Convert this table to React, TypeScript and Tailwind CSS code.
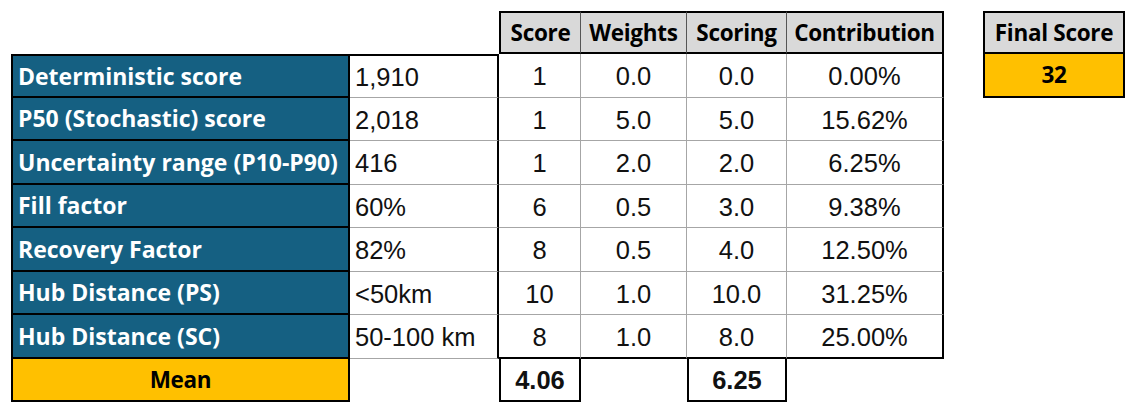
import React from 'react'

const rows = [
  { label: 'Deterministic score', value: '1,910', score: '1', weight: '0.0', scoring: '0.0', contrib: '0.00%' },
  { label: 'P50 (Stochastic) score', value: '2,018', score: '1', weight: '5.0', scoring: '5.0', contrib: '15.62%' },
  { label: 'Uncertainty range (P10-P90)', value: '416', score: '1', weight: '2.0', scoring: '2.0', contrib: '6.25%' },
  { label: 'Fill factor', value: '60%', score: '6', weight: '0.5', scoring: '3.0', contrib: '9.38%' },
  { label: 'Recovery Factor', value: '82%', score: '8', weight: '0.5', scoring: '4.0', contrib: '12.50%' },
  { label: 'Hub Distance (PS)', value: '<50km', score: '10', weight: '1.0', scoring: '10.0', contrib: '31.25%' },
  { label: 'Hub Distance (SC)', value: '50-100 km', score: '8', weight: '1.0', scoring: '8.0', contrib: '25.00%' },
]

// row heights so lines fall on 54, 98, 141 ... 402
const heights = ['h-[44px]', 'h-[43px]', 'h-[44px]', 'h-[43px]', 'h-[44px]', 'h-[43px]', 'h-[44px]']

const head = "font-['Open_Sans','Liberation_Sans',sans-serif] font-bold text-[22.5px] tracking-[-0.3px] text-black"
const num = "font-['Liberation_Sans',Arial,sans-serif] text-[25.5px] text-[#111]"

export default function App() {
  return (
    <div className="w-[1135px] h-[412px] bg-white flex pt-[11px] pl-[11px]">
      <div className="grid grid-cols-[339px_149px_82px_106px_100px_157px] content-start">
        {/* header */}
        <div className="h-[43px]" />
        <div className="h-[43px]" />
        <div className={`h-[43px] bg-[#d9d9d9] border-t-2 border-b-2 border-l-2 border-black border-r border-r-[#555] flex items-center justify-center ${head}`}>Score</div>
        <div className={`h-[43px] bg-[#d9d9d9] border-t-2 border-b-2 border-black border-r border-r-[#555] flex items-center justify-center ${head}`}>Weights</div>
        <div className={`h-[43px] bg-[#d9d9d9] border-t-2 border-b-2 border-black border-r border-r-[#555] flex items-center justify-center ${head}`}>Scoring</div>
        <div className={`h-[43px] bg-[#d9d9d9] border-t-2 border-b-2 border-r-2 border-black flex items-center justify-center ${head}`}>Contribution</div>

        {rows.map((r, i) => {
          const first = i === 0
          const last = i === rows.length - 1
          const h = heights[i]
          const bottom = last ? 'border-b-2 border-b-black' : 'border-b border-b-[#a6a6a6]'
          return (
            <React.Fragment key={r.label}>
              <div className={`${h} bg-[#156082] border-l-2 border-r-2 border-b-2 border-black ${first ? 'border-t-2' : ''} flex items-center pl-[5px] font-['Open_Sans','Liberation_Sans',sans-serif] font-bold text-[23px] text-white`}>
                {r.label}
              </div>
              <div className={`${h} border-r-2 border-r-black border-b border-b-[#a6a6a6] ${first ? 'border-t-2 border-t-black' : ''} flex items-center pl-[5px] pt-[2px] ${num}`}>
                {r.value}
              </div>
              <div className={`${h} border-r border-r-[#a6a6a6] ${bottom} flex items-center justify-center pt-[2px] ${num}`}>{r.score}</div>
              <div className={`${h} border-r border-r-[#a6a6a6] ${bottom} flex items-center justify-center pt-[2px] ${num}`}>{r.weight}</div>
              <div className={`${h} border-r border-r-[#a6a6a6] ${bottom} flex items-center justify-center pt-[2px] ${num}`}>{r.scoring}</div>
              <div className={`${h} border-r-2 border-r-black ${bottom} flex items-center justify-center pt-[2px] ${num}`}>{r.contrib}</div>
            </React.Fragment>
          )
        })}

        {/* mean row */}
        <div className={`h-[43px] bg-[#ffc000] border-l-2 border-r-2 border-b-2 border-black flex items-center justify-center ${head}`}>Mean</div>
        <div className="h-[43px]" />
        <div className={`h-[43px] border-l-2 border-r-2 border-b-2 border-black flex items-center justify-center pt-[2px] ${num} font-bold`}>4.06</div>
        <div className="h-[43px]" />
        <div className={`h-[43px] border-l-2 border-r-2 border-b-2 border-black flex items-center justify-center pt-[2px] ${num} font-bold`}>6.25</div>
        <div className="h-[43px]" />
      </div>

      <div className="ml-[39px] w-[142px] flex flex-col self-start">
        <div className={`h-[43px] bg-[#d9d9d9] border-2 border-black flex items-center justify-center ${head}`}>Final Score</div>
        <div className={`h-[44px] bg-[#ffc000] border-l-2 border-r-2 border-b-2 border-black flex items-center justify-center ${head}`}>32</div>
      </div>
    </div>
  )
}
